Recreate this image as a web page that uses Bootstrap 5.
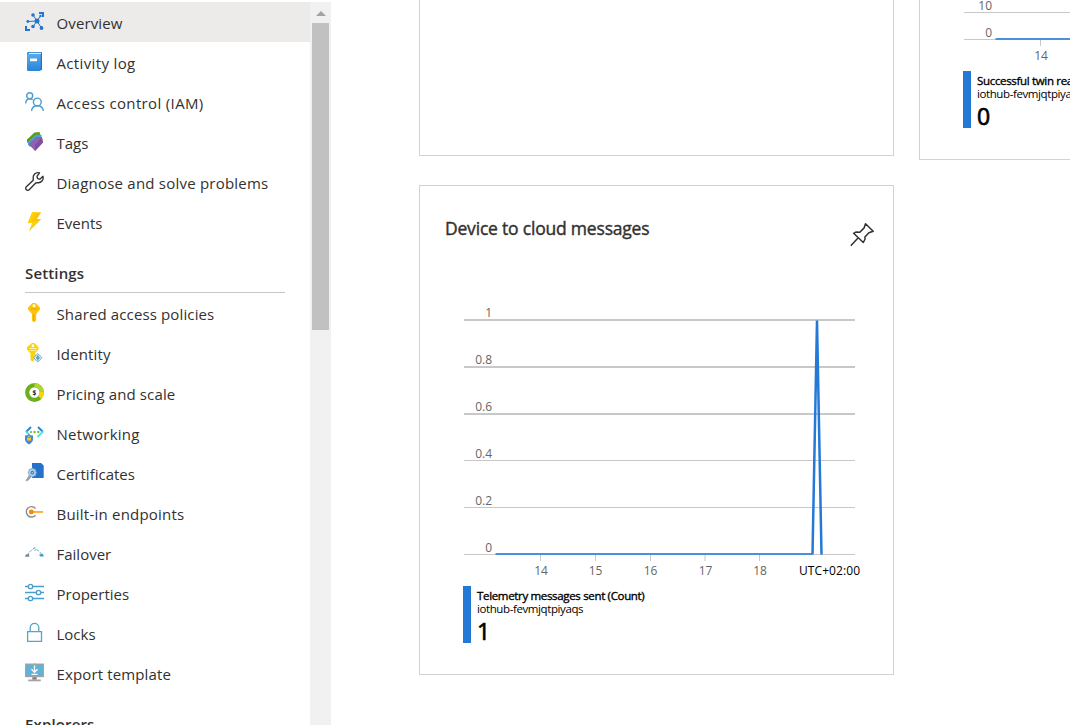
<!DOCTYPE html>
<html lang="en">
<head>
<meta charset="utf-8">
<meta name="viewport" content="width=device-width, initial-scale=1">
<title>IoT Hub - Overview</title>
<link href="https://cdn.jsdelivr.net/npm/bootstrap@5.3.0/dist/css/bootstrap.min.css" rel="stylesheet">
<style>
  body { font-family: "Open Sans", "Noto Sans", sans-serif; color: #323130; background: #fff; }
  .portal { height: 725px; }
  .side-menu { width: 310px; padding-top: 2px; }
  .menu-item { height: 40px; padding-left: 25px; gap: 12.5px; font-size: 15px; border: 0; color: #323130; letter-spacing: .13px; }
  .menu-item.current { background: #edebe9; }
  .menu-item.snug { letter-spacing: 0; }
  .menu-item.airy { letter-spacing: .22px; }
  .menu-item.wide { letter-spacing: .35px; }
  .menu-item span { padding-top: 2px; white-space: nowrap; }
  .menu-item svg { width: 19px; height: 19px; margin-top: -1px; overflow: visible; flex: none; }
  .menu-heading { height: 51px; margin: 0 25px; padding-top: 13px; border-bottom: 1px solid #c8c6c4; font-size: 15px; line-height: 36px; font-weight: 600; letter-spacing: .15px; }
  .scroll-track { width: 21px; margin-top: 2px; padding: 9px 2px 0; background: #f1f1f1; }
  .scroll-thumb { width: 17px; height: 307px; margin-top: 7px; background: #c1c1c1; }
  .board { padding-left: 88px; gap: 25px; }
  .board-col { width: 475px; flex: none; }
  .tile { border: 1px solid #d2d2d2; border-radius: 0; padding: 30px 19px 0 25px; }
  .tile-cut { border-top: 0; padding-top: 0; }
  .tile-title { font-size: 17.5px; line-height: 25px; letter-spacing: -.2px; -webkit-text-stroke: .4px currentColor; }
  .tile-head { height: 84px; }
  .chart { margin-left: 18px; overflow: visible; font-size: 12px; }
  .legend-box { margin-left: 18px; height: 57px; gap: 6px; color: #000; line-height: 13px; font-size: 11.5px; white-space: nowrap; }
  .legend-bar { width: 8px; background: #2479d7; }
  .legend-text { padding-top: 3px; }
  .legend-name { letter-spacing: -.33px; -webkit-text-stroke: .35px currentColor; }
  .legend-hub { letter-spacing: -.4px; }
  .legend-value { font-size: 23px; line-height: 28px; margin-top: 2px; -webkit-text-stroke: .7px currentColor; }
</style>
</head>
<body class="overflow-hidden">
<div class="portal d-flex overflow-hidden">
  <nav class="side-menu flex-shrink-0">
    <div class="list-group list-group-flush">
      <a class="menu-item current d-flex align-items-center text-decoration-none">
        <svg viewBox="0 0 19 19"><g fill="#2374d0"><path d="M14 0h5v5h-2V2h-3zM0 14h2v3h3v2H0z"/><circle cx="12" cy="9" r="2.500"/><circle cx="8" cy="3" r="1.800"/><circle cx="2.800" cy="9.500" r="1.400"/><circle cx="8" cy="14.500" r="1.800"/><circle cx="16.500" cy="16" r="1.900"/><circle cx="15.500" cy="4" r="1.200"/></g><path d="M8 3l4 6 3.500-5M2.800 9.500L12 9l-4 5.500M12 9l4.500 7" stroke="#2374d0" stroke-width="1" fill="none"/></svg><span>Overview</span></a>
      <a class="menu-item wide d-flex align-items-center text-decoration-none">
        <svg viewBox="0 0 19 19"><defs><linearGradient id="book" x2="0" y2="1"><stop stop-color="#56acf0"/><stop offset="1" stop-color="#2b83d9"/></linearGradient></defs><path d="M3.500 0H16a1 1 0 0 1 1 1v17H3a1 1 0 0 1-1-1V1.500A1.500 1.500 0 0 1 3.500 0z" fill="#2470bd"/><path d="M4 .7h12v1.200H3.300z" fill="#d9e9f7"/><path d="M2 2h13.800v15.800A1 1 0 0 1 15 19H3.200A1.200 1.200 0 0 1 2 17.800z" fill="url(#book)"/><path d="M5 6.500h7v2.700H5z" fill="#fff"/></svg><span>Activity log</span></a>
      <a class="menu-item wide d-flex align-items-center text-decoration-none">
        <svg viewBox="0 0 19 19" fill="none" stroke="#4a9ecb" stroke-width="1.400"><circle cx="4.700" cy="3.700" r="3"/><circle cx="12.300" cy="10" r="3.900"/><path d="M.7 11.500c.2-3 1.700-4.700 4-4.700 1.200 0 2.100.3 2.900 1M6.600 19c.2-3.200 2.300-5.200 5.700-5.200s5.700 2 6 5.200"/></svg><span>Access control (IAM)</span></a>
      <a class="menu-item snug d-flex align-items-center text-decoration-none">
        <svg viewBox="0 0 19 19"><path d="M2 7.500L9.500.5l5-.5 1 3L4 13 2 10z" fill="#5e9d12"/><path d="M3 10l8-7.500L16.500 3v5L5 15 3 12.500z" fill="#4ba2cf"/><path d="M3.700 11.700L11.500 5l5.300-.1L18 10.500 10 19l-5.600-6z" fill="#8f62ad"/><path d="M10 13l6.800-8.100L18 10.500 10 19z" fill="#7f4fa3"/></svg><span>Tags</span></a>
      <a class="menu-item airy d-flex align-items-center text-decoration-none">
        <svg viewBox="0 0 19 19" fill="none" stroke="#323130" stroke-width="1.350" stroke-linejoin="round"><path d="M14.500.8A5 5 0 0 0 8.300 7L8 8.500l-6.700 6.300a2.050 2.050 0 0 0 2.900 2.900L10.700 11l1.700-.3A5 5 0 0 0 18 4.300l-3.200 2.900-2.200-.6-.6-2.200z"/></svg><span>Diagnose and solve problems</span></a>
      <a class="menu-item snug d-flex align-items-center text-decoration-none">
        <svg viewBox="0 0 19 19"><path d="M7.200.3h9L12 7h4.300L4.200 19l3.200-8H2.800z" fill="#ffc20a"/><path d="M7.200.3h4L5.500 9.500H14L4.200 19l3.200-8H2.800z" fill="#fbd306"/></svg><span>Events</span></a>
    </div>
    <div class="menu-heading">Settings</div>
    <div class="list-group list-group-flush">
      <a class="menu-item d-flex align-items-center text-decoration-none">
        <svg viewBox="0 0 19 19"><path fill-rule="evenodd" d="M7.500 0h3L15 4.500v2L11.200 11v6.500L9.500 19h-1L7 17.500V11L3 6.500v-2zM9 1.300a1.500 1.500 0 1 0 .01 0z" fill="#fcc40b"/><path d="M5.500 5.200h7.200v1.200H5.500zM8 11h1.200v6.500H8z" fill="#efa708"/></svg><span>Shared access policies</span></a>
      <a class="menu-item d-flex align-items-center text-decoration-none">
        <svg viewBox="0 0 19 19"><path fill-rule="evenodd" d="M7 0h2.500l4 4v2.500L10 10.500l1 1.500-1.500 1 1 1-1 1.500L9 18l-1 .7L5.500 17v-6.500L2 6.500V4zM8 1.300a1.400 1.400 0 1 0 .01 0z" fill="#fbd30d"/><path d="M4.500 5h7v1h-7zM4.500 7h7v.7h-7z" fill="#fff2a8"/><path d="M12.800 10.500l4.200 4.300-4.200 4.200-4.300-4.200z" fill="#d6ecf4" stroke="#65a9c9" stroke-width=".9"/><path d="M12.800 12v5.500M11 14.800l1.800-1.500 1.800 1.500-1.800 1.600z" fill="#83bad1" stroke="#468dae" stroke-width=".7"/></svg><span>Identity</span></a>
      <a class="menu-item d-flex align-items-center text-decoration-none">
        <svg viewBox="0 0 19 19"><circle cx="9.500" cy="9.500" r="7.300" fill="#fff" stroke="#6bae1e" stroke-width="4.200"/><path d="M9.500 2.200a7.300 7.300 0 0 1 7.200 6.500" fill="none" stroke="#b3d334" stroke-width="4.200"/><path d="M16.700 8.700a7.300 7.300 0 0 1-2 5.800" fill="none" stroke="#fbd306" stroke-width="4.200"/><text x="9.500" y="12" font-size="6.500" font-weight="700" text-anchor="middle" fill="#222">$</text></svg><span>Pricing and scale</span></a>
      <a class="menu-item airy d-flex align-items-center text-decoration-none">
        <svg viewBox="0 0 19 19" fill="none"><g stroke-width="1.800"><path d="M6 4L1 9" stroke="#1f82d4"/><path d="M1 8.500l3 2.800" stroke="#50d7f2"/><path d="M13 4l5 5" stroke="#1f82d4"/><path d="M18 8.500L12.500 14" stroke="#50e0f2"/></g><g fill="#80bd20"><circle cx="6" cy="9" r="1.100"/><circle cx="9.500" cy="9" r="1.200"/><circle cx="13.300" cy="9" r="1.200"/></g><path d="M0 12.500q2.300.1 4-1.500 1.700 1.600 4 1.500v3.700c0 2.500-2 4-4 5.300-2-1.300-4-2.800-4-5.300z" fill="#4387d8"/><path d="M2.100 14.700h3.900v2.900H2.100z" fill="#fbc61c"/><path d="M2.900 14.700v-.8q1.200-1.700 2.400 0v.8" stroke="#d6d49a" stroke-width=".7"/></svg><span>Networking</span></a>
      <a class="menu-item snug d-flex align-items-center text-decoration-none">
        <svg viewBox="0 0 19 19"><path d="M7 0h9l2.700 2.500V15H7z" fill="#2472ca"/><path d="M4.500 13L1.300 18M6 13l-3.300 4" stroke="#9a9fa3" stroke-width="1.800"/><path d="M7.300 5l1.500.8 1.700.4.3 1.700.9 1.500-.8 1.600-.2 1.700-1.700.5-1.500.9-1.600-.8-1.700-.4-.4-1.700-.8-1.500.8-1.600.3-1.700 1.700-.5z" fill="#9ec7e6" stroke="#7196b8" stroke-width=".6"/><circle cx="7.300" cy="9.700" r="2.400" fill="#3b7fc0" stroke="#d3e7f4" stroke-width=".8"/><circle cx="7.300" cy="9.700" r=".8" fill="#b4d5ec"/></svg><span>Certificates</span></a>
      <a class="menu-item airy d-flex align-items-center text-decoration-none">
        <svg viewBox="0 0 19 19"><path d="M10.500 5.500A5.200 5.200 0 1 0 10.500 12.200" fill="none" stroke="#8b8b8b" stroke-width="1.400"/><path d="M6 8h12v1.900H6z" fill="#ffab40"/><circle cx="6.300" cy="8.900" r="2.400" fill="#fb8500"/></svg><span>Built-in endpoints</span></a>
      <a class="menu-item snug d-flex align-items-center text-decoration-none">
        <svg viewBox="0 0 19 19"><path d="M2.500 12.500Q4 8.500 7.800 6.500" fill="none" stroke="#8fc3dc" stroke-width="1.100" stroke-dasharray="3 1"/><path d="M11.500 6.500Q15.500 8.500 17 12.500" fill="none" stroke="#8fc3dc" stroke-width="1.100" stroke-dasharray="3 1"/><path d="M0 13.500l1-2 3-.5.300 2.700H0z" fill="#7c8589"/><path d="M14.200 11.500l3.500-.8 1.300 2.700h-4z" fill="#4a9ac5"/><path d="M8 6.500l1-1.700 1.500.2M9.500 8l1.600-1.700" fill="none" stroke="#57a3ca" stroke-width="1"/></svg><span>Failover</span></a>
      <a class="menu-item snug d-flex align-items-center text-decoration-none">
        <svg viewBox="0 0 19 19"><path d="M0 3.500h19M0 9.500h19M0 15.500h19" stroke="#4b9dcc" stroke-width="1.300"/><g fill="#fff" stroke="#4b9dcc" stroke-width="1.300"><circle cx="5.500" cy="3.500" r="2.200"/><circle cx="13.500" cy="9.500" r="2.200"/><circle cx="5.500" cy="15.500" r="2.200"/></g></svg><span>Properties</span></a>
      <a class="menu-item snug d-flex align-items-center text-decoration-none">
        <svg viewBox="0 0 19 19" fill="none" stroke="#55a5d0" stroke-width="1.300"><path d="M5.200 8.500V4.700a4.300 4.300 0 0 1 8.600 0v3.800"/><path d="M2.600 8.600h13.900v9.700H2.600z"/></svg><span>Locks</span></a>
      <a class="menu-item d-flex align-items-center text-decoration-none">
        <svg viewBox="0 0 19 19"><path d="M0 .5h19v13.700H0z" fill="#a2a4a6"/><path d="M1.200 1.700h16.600v11.200H1.200z" fill="#5fb2da"/><path d="M8.800.3h1.600v1H8.800z" fill="#b2cc27"/><path d="M7.300 14.200h4.400v2.500H7.300z" fill="#7b7d7f"/><path d="M3.200 16.500h12.600v1.800H3.200z" fill="#a2a4a6"/><path d="M9.500 2.500v6.800M6.500 6.200l3 3.100 3-3.100M6.500 11.400h6" stroke="#fff" stroke-width="1.300" fill="none"/></svg><span>Export template</span></a>
    </div>
    <div class="menu-heading">Explorers</div>
  </nav>
  <div class="scroll-track flex-shrink-0">
    <svg class="d-block mx-auto" width="10" height="5" viewBox="0 0 10 5"><path d="M5 0l5 5H0z" fill="#a3a3a3"/></svg>
    <div class="scroll-thumb"></div>
  </div>
  <main class="board d-flex flex-grow-1 overflow-hidden align-items-start">
    <div class="board-col">
      <section class="card tile tile-cut" style="height:156px"></section>
      <section class="card tile" style="height:490px;margin-top:29px">
        <div class="tile-head d-flex justify-content-between align-items-start">
          <div class="tile-title">Device to cloud messages</div>
          <svg width="24" height="24" viewBox="0 0 24 24" style="margin-top:7px" fill="none" stroke="#323130" stroke-width="1.500" stroke-linejoin="round"><path d="M15.500.8l7.700 7.400-4.300 1.500-4 4.400.2 1.900-1.800 3.500L3.600 10.300l2.200-1.200 4 .1 4.300-4.300zM8.200 14.700L.8 22.700"/></svg>
        </div>
        <svg class="chart" width="400" height="286" viewBox="463 300 400 286">
          <g fill="#c8c8c8"><path d="M464 319h391v2H464zM464 366h391v2H464zM464 413h391v2H464zM464 460h391v1H464zM464 507h391v1H464zM464 554h391v1H464z"/><path d="M540 555h1v6h-1zM595 555h1v6h-1zM650 555h1v6h-1zM704.500 555h1v6h-1zM759 555h1v6h-1z"/></g>
          <path d="M495.500 554H812" stroke="#4a90de" stroke-width="2"/>
          <path d="M812.500 554.500L817 320.500L821.500 554.500" fill="none" stroke="#2479d7" stroke-width="2.500" stroke-linejoin="bevel"/>
          <g fill="#666" text-anchor="end"><text x="492" y="317">1</text><text x="492" y="364">0.8</text><text x="492" y="411">0.6</text><text x="492" y="458">0.4</text><text x="492" y="505">0.2</text><text x="492" y="552">0</text></g>
          <g fill="#666" text-anchor="middle"><text x="541" y="575">14</text><text x="595.500" y="575">15</text><text x="650.500" y="575">16</text><text x="705.500" y="575">17</text><text x="760" y="575">18</text></g>
          <text x="799" y="575" textLength="61" fill="#000">UTC+02:00</text>
        </svg>
        <div class="legend-box d-flex"><div class="legend-bar"></div><div class="legend-text"><div class="legend-name">Telemetry messages sent (Count)</div><div class="legend-hub">iothub-fevmjqtpiyaqs</div><div class="legend-value">1</div></div></div>
      </section>
    </div>
    <div class="board-col">
      <section class="card tile tile-cut" style="height:160px">
        <svg class="chart" width="400" height="71" viewBox="963 0 400 71">
          <path d="M964 12h391v1H964zM964 39h391v1H964zM1040 40h1v6h-1z" fill="#c8c8c8"/>
          <path d="M995.500 39H1355" stroke="#4a90de" stroke-width="2"/>
          <g fill="#666" text-anchor="end"><text x="992" y="10">10</text><text x="992" y="37">0</text></g>
          <text x="1041" y="60" text-anchor="middle" fill="#666">14</text>
        </svg>
        <div class="legend-box d-flex"><div class="legend-bar"></div><div class="legend-text"><div class="legend-name">Successful twin reads from devices (Count)</div><div class="legend-hub">iothub-fevmjqtpiyaqs</div><div class="legend-value">0</div></div></div>
      </section>
    </div>
  </main>
</div>
<script src="https://cdn.jsdelivr.net/npm/bootstrap@5.3.0/dist/js/bootstrap.bundle.min.js"></script>
</body>
</html>
